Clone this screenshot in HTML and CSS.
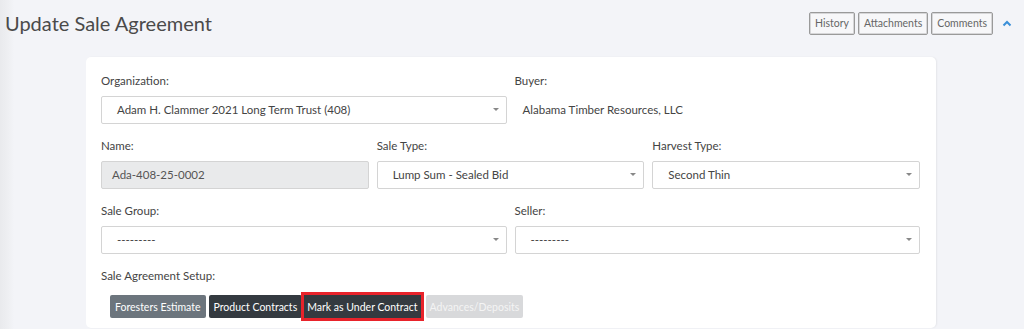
FILE: index.html
```html
<!DOCTYPE html>
<html>
<head>
  <meta charset="utf-8">
  <title>Update Sale Agreement</title>
  <link rel="stylesheet" href="styles.css">
</head>
<body>
  <div class="page">
    <div class="page-header">
      <h1>Update Sale Agreement</h1>
      <div class="header-actions">
        <button class="btn-outline">History</button>
        <button class="btn-outline">Attachments</button>
        <button class="btn-outline">Comments</button>
        <svg class="chevron" width="10" height="7" viewBox="0 0 10 7">
          <path d="M1.5 5.5 L5 2 L8.5 5.5" fill="none" stroke="#3b8fd8" stroke-width="2"/>
        </svg>
      </div>
    </div>

    <div class="card">
      <div class="row two">
        <div class="field">
          <label>Organization:</label>
          <div class="select">Adam H. Clammer 2021 Long Term Trust (408)</div>
        </div>
        <div class="field">
          <label>Buyer:</label>
          <div class="static">Alabama Timber Resources, LLC</div>
        </div>
      </div>

      <div class="row three">
        <div class="field">
          <label>Name:</label>
          <div class="input disabled">Ada-408-25-0002</div>
        </div>
        <div class="field">
          <label>Sale Type:</label>
          <div class="select">Lump Sum - Sealed Bid</div>
        </div>
        <div class="field">
          <label>Harvest Type:</label>
          <div class="select">Second Thin</div>
        </div>
      </div>

      <div class="row two">
        <div class="field">
          <label>Sale Group:</label>
          <div class="select">---------</div>
        </div>
        <div class="field">
          <label>Seller:</label>
          <div class="select">---------</div>
        </div>
      </div>

      <div class="setup">
        <label>Sale Agreement Setup:</label>
        <div class="setup-buttons">
          <button class="btn btn-secondary">Foresters Estimate</button>
          <button class="btn btn-dark">Product Contracts</button>
          <button class="btn btn-dark highlighted">Mark as Under Contract</button>
          <button class="btn btn-disabled">Advances/Deposits</button>
        </div>
      </div>
    </div>
  </div>
</body>
</html>
```

FILE: styles.css
```css
html, body {
  margin: 0;
  height: 100%;
}

body {
  font-family: Lato, "Open Sans", sans-serif;
  font-size: 11.5px;
  color: #444;
  background: #f3f4f8;
  overflow: hidden;
}

.page {
  min-height: 100%;
  background: linear-gradient(to right, #e9eaed 0, #eeeff2 8px, #f3f4f8 14px);
}

.page-header {
  display: flex;
  align-items: center;
  justify-content: space-between;
  height: 46px;
  padding: 0 0 0 5px;
}

h1 {
  margin: 0;
  font-size: 20px;
  font-weight: 400;
  color: #4a4a4a;
}

.header-actions {
  display: flex;
  align-items: center;
  gap: 3px;
  padding-right: 12px;
}

.btn-outline {
  font-family: inherit;
  font-size: 10.5px;
  color: #666;
  background: #f7f7f9;
  border: 1px solid #9a9a9a;
  box-shadow: inset 0 0 0 1px #d6d6d8;
  border-radius: 2px;
  height: 23px;
  padding: 0 5px;
}

.chevron {
  margin-left: 6px;
}

.card {
  margin: 11px 88px 0 86px;
  background: #fff;
  border-radius: 5px;
  box-shadow: 1px 0 2px rgba(0, 0, 0, 0.06);
  padding: 16px 16px 10px 15px;
}

.row {
  display: grid;
  gap: 8px;
  margin-bottom: 14px;
}

.row.two {
  grid-template-columns: 1fr 1fr;
}

.row.three {
  grid-template-columns: 1fr 1fr 1fr;
}

label {
  display: block;
  font-size: 11.5px;
  color: #444;
  line-height: 16px;
  margin-bottom: 7px;
}

.select,
.input {
  height: 28px;
  box-sizing: border-box;
  border: 1px solid #d4d4d4;
  border-radius: 2px;
  line-height: 26px;
  font-size: 11.5px;
  color: #444;
}

.select {
  position: relative;
  padding-left: 15px;
}

.select::after {
  content: "";
  position: absolute;
  right: 7px;
  top: 11px;
  border-left: 3px solid transparent;
  border-right: 3px solid transparent;
  border-top: 3px solid #888;
}

.input {
  padding-left: 10px;
}

.input.disabled {
  background: #e9eaeb;
  color: #555;
}

.static {
  line-height: 28px;
  padding-left: 8px;
  font-size: 11.5px;
  color: #444;
}

.setup label {
  margin-bottom: 11px;
}

.setup-buttons {
  display: flex;
  gap: 3px;
  padding-left: 9px;
}

.btn {
  font-family: inherit;
  font-size: 10.5px;
  height: 23px;
  padding: 0 5px;
  border: none;
  border-radius: 2px;
  color: #fff;
}

.btn-secondary {
  background: #6c757d;
}

.btn-dark {
  background: #343a40;
}

.btn-disabled {
  background: #d8d9db;
  color: #f4f4f4;
  padding: 0 4px;
}

.highlighted {
  outline: 3px solid #e8232b;
  outline-offset: 0;
  border-radius: 0;
  padding: 0 3px;
  margin: 0 2px 0 -1px;
}
```
